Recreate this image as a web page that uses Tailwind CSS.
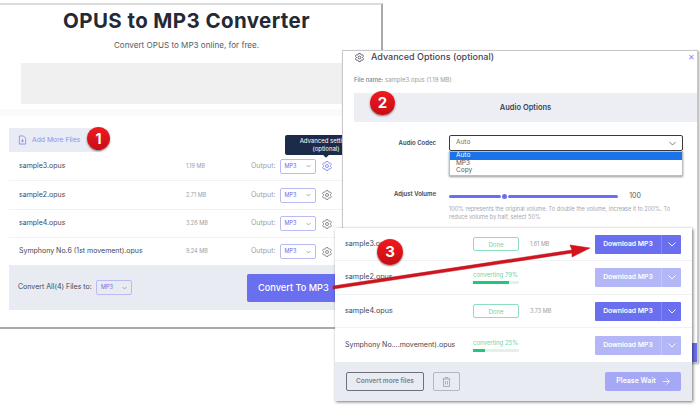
<!DOCTYPE html>
<html lang="en">
<head>
<meta charset="UTF-8">
<title>OPUS to MP3 Converter</title>
<script src="https://cdn.jsdelivr.net/npm/@tailwindcss/browser@4"></script>
</head>
<body class="bg-white">
<div class="relative w-[700px] h-[407px] overflow-hidden bg-white font-['Inter','Liberation_Sans',sans-serif] text-[#3f4654]">

  <!-- window 1: converter page -->
  <div class="absolute left-0 top-[3px] w-[383px] h-[326px] bg-white border-t-2 border-r-2 border-b-2 border-[#a9a9a9] border-t-[#dcdcdc]">
    <h1 class="pr-[8px] text-center text-[20.5px] leading-[32px] font-bold tracking-[0.4px] text-[#232a36]">OPUS to MP3 Converter</h1>
    <p class="mt-[2px] pr-[8px] text-center text-[8.1px] leading-[12px] text-[#555b66]">Convert OPUS to MP3 online, for free.</p>
    <div class="mt-[12px] ml-[21px] mr-[20px] h-[41px] bg-[#f0f0f0]"></div>
    <div class="mt-[5px] h-[7px] bg-[#fafafa]"></div>

    <div class="mt-[12px] ml-[9px] mr-[6px]">
      <div class="flex items-center gap-[4px] w-[92px] h-[24px] pl-[9px] bg-[#e9ecf4] text-[#8d90ec]">
        <svg class="w-[9px] h-[10px]" viewBox="0 0 20 22" fill="none" stroke="currentColor" stroke-width="2"><path d="M3 2h9l5 5v13H3zM10 9v7M7 13h6"/></svg>
        <span class="ml-[1px] text-[6.8px]">Add More Files</span>
      </div>
      <div>
        <div class="flex items-center h-[29px] border-b border-[#f1f2f5] pl-[10px] text-[7px]">
          <span class="w-[167px]">sample3.opus</span>
          <span class="w-[65px] text-[5.5px] text-[#9a9ea6]">1.19 MB</span>
          <span class="text-[7px] text-[#9a9ea6]">Output:</span>
          <span class="ml-[4px] flex items-center justify-between w-[36px] h-[15px] px-[4px] border border-[#b9bbf3] rounded-[2px] text-[5.5px] text-[#6a6de6]">MP3
            <svg class="w-[5px] h-[4px]" viewBox="0 0 10 8" fill="none" stroke="#8a8d98" stroke-width="1.4"><path d="M1 2l4 4 4-4"/></svg>
          </span>
          <svg class="ml-[5px] w-[12px] h-[12px]" viewBox="0 0 24 24" fill="none" stroke="#6a6de6" stroke-width="1.5"><path d="M9.594 3.94c.09-.542.56-.94 1.11-.94h2.593c.55 0 1.02.398 1.11.94l.213 1.281c.063.374.313.686.645.87.074.04.147.083.22.127.324.196.72.257 1.075.124l1.217-.456a1.125 1.125 0 011.37.49l1.296 2.247a1.125 1.125 0 01-.26 1.431l-1.003.827c-.293.24-.438.613-.431.992a6.759 6.759 0 010 .255c-.007.378.138.75.43.99l1.005.828c.424.35.534.954.26 1.43l-1.298 2.247a1.125 1.125 0 01-1.369.491l-1.217-.456c-.355-.133-.75-.072-1.076.124a6.57 6.57 0 01-.22.128c-.331.183-.581.495-.644.869l-.213 1.28c-.09.543-.56.941-1.11.941h-2.594c-.55 0-1.02-.398-1.11-.94l-.213-1.281c-.062-.374-.312-.686-.644-.87a6.52 6.52 0 01-.22-.127c-.325-.196-.72-.257-1.076-.124l-1.217.456a1.125 1.125 0 01-1.369-.49l-1.297-2.247a1.125 1.125 0 01.26-1.431l1.004-.827c.292-.24.437-.613.43-.992a6.932 6.932 0 010-.255c.007-.378-.138-.75-.43-.99l-1.004-.828a1.125 1.125 0 01-.26-1.43l1.297-2.247a1.125 1.125 0 011.37-.491l1.216.456c.356.133.751.072 1.076-.124.072-.044.146-.087.22-.128.332-.183.582-.495.644-.869l.214-1.281zM15 12a3 3 0 11-6 0 3 3 0 016 0z"/></svg>
        </div>
        <div class="flex items-center h-[29px] border-b border-[#f1f2f5] pl-[10px] text-[7px]">
          <span class="w-[167px]">sample2.opus</span>
          <span class="w-[65px] text-[5.5px] text-[#9a9ea6]">2.71 MB</span>
          <span class="text-[7px] text-[#9a9ea6]">Output:</span>
          <span class="ml-[4px] flex items-center justify-between w-[36px] h-[15px] px-[4px] border border-[#b9bbf3] rounded-[2px] text-[5.5px] text-[#6a6de6]">MP3
            <svg class="w-[5px] h-[4px]" viewBox="0 0 10 8" fill="none" stroke="#8a8d98" stroke-width="1.4"><path d="M1 2l4 4 4-4"/></svg>
          </span>
          <svg class="ml-[5px] w-[12px] h-[12px]" viewBox="0 0 24 24" fill="none" stroke="#60646e" stroke-width="1.5"><path d="M9.594 3.94c.09-.542.56-.94 1.11-.94h2.593c.55 0 1.02.398 1.11.94l.213 1.281c.063.374.313.686.645.87.074.04.147.083.22.127.324.196.72.257 1.075.124l1.217-.456a1.125 1.125 0 011.37.49l1.296 2.247a1.125 1.125 0 01-.26 1.431l-1.003.827c-.293.24-.438.613-.431.992a6.759 6.759 0 010 .255c-.007.378.138.75.43.99l1.005.828c.424.35.534.954.26 1.43l-1.298 2.247a1.125 1.125 0 01-1.369.491l-1.217-.456c-.355-.133-.75-.072-1.076.124a6.57 6.57 0 01-.22.128c-.331.183-.581.495-.644.869l-.213 1.28c-.09.543-.56.941-1.11.941h-2.594c-.55 0-1.02-.398-1.11-.94l-.213-1.281c-.062-.374-.312-.686-.644-.87a6.52 6.52 0 01-.22-.127c-.325-.196-.72-.257-1.076-.124l-1.217.456a1.125 1.125 0 01-1.369-.49l-1.297-2.247a1.125 1.125 0 01.26-1.431l1.004-.827c.292-.24.437-.613.43-.992a6.932 6.932 0 010-.255c.007-.378-.138-.75-.43-.99l-1.004-.828a1.125 1.125 0 01-.26-1.43l1.297-2.247a1.125 1.125 0 011.37-.491l1.216.456c.356.133.751.072 1.076-.124.072-.044.146-.087.22-.128.332-.183.582-.495.644-.869l.214-1.281zM15 12a3 3 0 11-6 0 3 3 0 016 0z"/></svg>
        </div>
        <div class="flex items-center h-[28px] border-b border-[#f1f2f5] pl-[10px] text-[7px]">
          <span class="w-[167px]">sample4.opus</span>
          <span class="w-[65px] text-[5.5px] text-[#9a9ea6]">3.26 MB</span>
          <span class="text-[7px] text-[#9a9ea6]">Output:</span>
          <span class="ml-[4px] flex items-center justify-between w-[36px] h-[15px] px-[4px] border border-[#b9bbf3] rounded-[2px] text-[5.5px] text-[#6a6de6]">MP3
            <svg class="w-[5px] h-[4px]" viewBox="0 0 10 8" fill="none" stroke="#8a8d98" stroke-width="1.4"><path d="M1 2l4 4 4-4"/></svg>
          </span>
          <svg class="ml-[5px] w-[12px] h-[12px]" viewBox="0 0 24 24" fill="none" stroke="#60646e" stroke-width="1.5"><path d="M9.594 3.94c.09-.542.56-.94 1.11-.94h2.593c.55 0 1.02.398 1.11.94l.213 1.281c.063.374.313.686.645.87.074.04.147.083.22.127.324.196.72.257 1.075.124l1.217-.456a1.125 1.125 0 011.37.49l1.296 2.247a1.125 1.125 0 01-.26 1.431l-1.003.827c-.293.24-.438.613-.431.992a6.759 6.759 0 010 .255c-.007.378.138.75.43.99l1.005.828c.424.35.534.954.26 1.43l-1.298 2.247a1.125 1.125 0 01-1.369.491l-1.217-.456c-.355-.133-.75-.072-1.076.124a6.57 6.57 0 01-.22.128c-.331.183-.581.495-.644.869l-.213 1.28c-.09.543-.56.941-1.11.941h-2.594c-.55 0-1.02-.398-1.11-.94l-.213-1.281c-.062-.374-.312-.686-.644-.87a6.52 6.52 0 01-.22-.127c-.325-.196-.72-.257-1.076-.124l-1.217.456a1.125 1.125 0 01-1.369-.49l-1.297-2.247a1.125 1.125 0 01.26-1.431l1.004-.827c.292-.24.437-.613.43-.992a6.932 6.932 0 010-.255c.007-.378-.138-.75-.43-.99l-1.004-.828a1.125 1.125 0 01-.26-1.43l1.297-2.247a1.125 1.125 0 011.37-.491l1.216.456c.356.133.751.072 1.076-.124.072-.044.146-.087.22-.128.332-.183.582-.495.644-.869l.214-1.281zM15 12a3 3 0 11-6 0 3 3 0 016 0z"/></svg>
        </div>
        <div class="flex items-center h-[27px] pl-[10px] text-[7px]">
          <span class="w-[167px]">Symphony No.6 (1st movement).opus</span>
          <span class="w-[65px] text-[5.5px] text-[#9a9ea6]">9.24 MB</span>
          <span class="text-[7px] text-[#9a9ea6]">Output:</span>
          <span class="ml-[4px] flex items-center justify-between w-[36px] h-[15px] px-[4px] border border-[#b9bbf3] rounded-[2px] text-[5.5px] text-[#6a6de6]">MP3
            <svg class="w-[5px] h-[4px]" viewBox="0 0 10 8" fill="none" stroke="#8a8d98" stroke-width="1.4"><path d="M1 2l4 4 4-4"/></svg>
          </span>
          <svg class="ml-[5px] w-[12px] h-[12px]" viewBox="0 0 24 24" fill="none" stroke="#60646e" stroke-width="1.5"><path d="M9.594 3.94c.09-.542.56-.94 1.11-.94h2.593c.55 0 1.02.398 1.11.94l.213 1.281c.063.374.313.686.645.87.074.04.147.083.22.127.324.196.72.257 1.075.124l1.217-.456a1.125 1.125 0 011.37.49l1.296 2.247a1.125 1.125 0 01-.26 1.431l-1.003.827c-.293.24-.438.613-.431.992a6.759 6.759 0 010 .255c-.007.378.138.75.43.99l1.005.828c.424.35.534.954.26 1.43l-1.298 2.247a1.125 1.125 0 01-1.369.491l-1.217-.456c-.355-.133-.75-.072-1.076.124a6.57 6.57 0 01-.22.128c-.331.183-.581.495-.644.869l-.213 1.28c-.09.543-.56.941-1.11.941h-2.594c-.55 0-1.02-.398-1.11-.94l-.213-1.281c-.062-.374-.312-.686-.644-.87a6.52 6.52 0 01-.22-.127c-.325-.196-.72-.257-1.076-.124l-1.217.456a1.125 1.125 0 01-1.369-.49l-1.297-2.247a1.125 1.125 0 01.26-1.431l1.004-.827c.292-.24.437-.613.43-.992a6.932 6.932 0 010-.255c.007-.378-.138-.75-.43-.99l-1.004-.828a1.125 1.125 0 01-.26-1.43l1.297-2.247a1.125 1.125 0 011.37-.491l1.216.456c.356.133.751.072 1.076-.124.072-.044.146-.087.22-.128.332-.183.582-.495.644-.869l.214-1.281zM15 12a3 3 0 11-6 0 3 3 0 016 0z"/></svg>
        </div>
      </div>
      <div class="flex items-center h-[45px] pl-[9px] bg-[#e8ebf1] text-[7px]">
        <span class="w-[73px] whitespace-nowrap">Convert All(4) Files to:</span>
        <span class="ml-[5px] flex items-center justify-between w-[36px] h-[15px] px-[4px] border border-[#b9bbf3] rounded-[2px] text-[5.5px] text-[#6a6de6]">MP3
          <svg class="w-[5px] h-[4px]" viewBox="0 0 10 8" fill="none" stroke="#8a8d98" stroke-width="1.4"><path d="M1 2l4 4 4-4"/></svg>
        </span>
        <span class="ml-[115px] flex items-center w-[110px] h-[28px] pl-[11px] rounded-[2px] bg-[#6a6ff0] text-white text-[9.2px] font-medium">Convert To MP3</span>
      </div>
    </div>

    <!-- tooltip on the first gear -->
    <div class="absolute left-[285px] top-[130px] w-[82px] h-[20px] pt-[2px] rounded-[2px] bg-[#1d2b4a] text-white text-[6px] leading-[8px] text-center">Advanced settings<br>(optional)
      <span class="absolute left-[39px] top-[18px] w-[4px] h-[4px] rotate-45 bg-[#1d2b4a]"></span>
    </div>
  </div>

  <!-- window 2: advanced options -->
  <div class="absolute left-[342px] top-[50px] w-[356px] h-[313px] bg-white border border-[#c9c9c9] shadow-[1px_1px_2px_rgba(0,0,0,0.35)]">
    <div class="flex items-center h-[12px] pl-[11px]">
      <svg class="w-[11px] h-[11px]" viewBox="0 0 24 24" fill="none" stroke="#3f4654" stroke-width="1.8"><path d="M9.594 3.94c.09-.542.56-.94 1.11-.94h2.593c.55 0 1.02.398 1.11.94l.213 1.281c.063.374.313.686.645.87.074.04.147.083.22.127.324.196.72.257 1.075.124l1.217-.456a1.125 1.125 0 011.37.49l1.296 2.247a1.125 1.125 0 01-.26 1.431l-1.003.827c-.293.24-.438.613-.431.992a6.759 6.759 0 010 .255c-.007.378.138.75.43.99l1.005.828c.424.35.534.954.26 1.43l-1.298 2.247a1.125 1.125 0 01-1.369.491l-1.217-.456c-.355-.133-.75-.072-1.076.124a6.57 6.57 0 01-.22.128c-.331.183-.581.495-.644.869l-.213 1.28c-.09.543-.56.941-1.11.941h-2.594c-.55 0-1.02-.398-1.11-.94l-.213-1.281c-.062-.374-.312-.686-.644-.87a6.52 6.52 0 01-.22-.127c-.325-.196-.72-.257-1.076-.124l-1.217.456a1.125 1.125 0 01-1.369-.49l-1.297-2.247a1.125 1.125 0 01.26-1.431l1.004-.827c.292-.24.437-.613.43-.992a6.932 6.932 0 010-.255c.007-.378-.138-.75-.43-.99l-1.004-.828a1.125 1.125 0 01-.26-1.43l1.297-2.247a1.125 1.125 0 011.37-.491l1.216.456c.356.133.751.072 1.076-.124.072-.044.146-.087.22-.128.332-.183.582-.495.644-.869l.214-1.281zM15 12a3 3 0 11-6 0 3 3 0 016 0z"/></svg>
      <span class="ml-[6px] text-[9px] leading-[12px] font-medium">Advanced Options (optional)</span>
      <span class="ml-auto mr-[2px] text-[8px] leading-[6px] text-[#8a8de8]">✕</span>
    </div>
    <p class="mt-[13px] ml-[11px] text-[6px] leading-[8px] text-[#9a9ea6]"><span class="font-medium text-[#7f838c]">File name:</span> sample3.opus (1.19 MB)</p>
    <div class="flex items-center justify-center mt-[9px] ml-[11px] h-[29px] bg-[#eceef3] text-[7.5px] font-semibold">Audio Options</div>

    <div class="relative flex mt-[13px]">
      <span class="shrink-0 w-[93px] pt-[3px] text-right text-[6px] font-semibold">Audio Codec</span>
      <div class="ml-[13px] shrink-0 flex items-center justify-between w-[234px] h-[16px] px-[6px] border border-[#3a3a3a] rounded-[2px] text-[6.5px] text-[#6b7079]">Auto
        <svg class="w-[7px] h-[5px]" viewBox="0 0 14 10" fill="none" stroke="#555" stroke-width="1.5"><path d="M1 2l6 6 6-6"/></svg>
      </div>
      <ul class="absolute left-[106px] top-[16px] w-[234px] bg-white border border-[#bdbdbd] text-[6.5px] leading-[7.7px] text-[#555b66] shadow-[0_1px_2px_rgba(0,0,0,0.4)]">
        <li class="pl-[6px] bg-[#1a73e8] text-white">Auto</li>
        <li class="pl-[6px]">MP3</li>
        <li class="pl-[6px]">Copy</li>
      </ul>
    </div>

    <div class="flex mt-[38px]">
      <span class="shrink-0 w-[93px] text-right text-[6px] font-semibold">Adjust Volume</span>
      <div class="ml-[13px] shrink-0 w-[234px]">
        <div class="flex items-center h-[14px]">
          <span class="w-[52px] h-[3px] rounded-full bg-[#6a6ff0]"></span>
          <span class="ml-[1px] w-[5px] h-[5px] rounded-full bg-[#6a6ff0]"></span>
          <span class="ml-[1px] w-[110px] h-[3px] rounded-full bg-[#6a6ff0]"></span>
          <span class="ml-[3px] w-[28px] text-center text-[7px] text-[#555b66]">100</span>
        </div>
        <p class="mt-[2px] text-[5.6px] leading-[8px] text-[#a3a7ae]">100% represents the original volume. To double the volume, increase it to 200%. To reduce volume by half, select 50%</p>
      </div>
    </div>
    <div class="absolute right-0 top-[292px] w-[5px] h-[19px] bg-[#6a6ff0]"></div>
  </div>

  <!-- window 3: results -->
  <div class="absolute left-[335px] top-[228px] w-[357px] h-[173px] bg-white shadow-[1px_1px_3px_rgba(0,0,0,0.55)]">
    <div class="flex items-center h-[33px] border-b border-[#f1f2f5] pl-[10px] text-[7.2px]">
      <span class="w-[128px]">sample3.opus</span>
      <span class="flex items-center justify-center w-[46px] h-[14px] border border-[#8fdcc0] rounded-[2px] text-[6px] text-[#6fd3ae]">Done</span>
      <span class="ml-[11px] w-[65px] text-[5.5px] text-[#9a9ea6]">1.61 MB</span>
      <div class="flex items-center w-[86px] h-[19px] rounded-[1px] bg-[#6a6ff0] text-white text-[6.8px] font-semibold">
        <span class="w-[66px] text-center">Download MP3</span>
        <span class="flex items-center justify-center flex-1 h-full border-l border-[#8488f2]"><svg class="w-[8px] h-[5px]" viewBox="0 0 16 10" fill="none" stroke="#fff" stroke-width="1.8"><path d="M1 1l7 7 7-7"/></svg></span>
      </div>
    </div>
    <div class="flex items-center h-[34px] border-b border-[#f1f2f5] pl-[10px] text-[7.2px]">
      <span class="w-[128px]">sample2.opus</span>
      <div class="w-[122px]">
        <p class="text-[6px] leading-[8px] text-[#6fd3ae]">converting 79%</p>
        <div class="mt-[2px] w-[46px] h-[3px] bg-[#dff3ea]"><div class="h-full bg-[#22c77f]" style="width:79%"></div></div>
      </div>
      <div class="flex items-center w-[86px] h-[19px] rounded-[1px] bg-[#b4b7f7] text-white text-[6.8px] font-semibold">
        <span class="w-[66px] text-center">Download MP3</span>
        <span class="flex items-center justify-center flex-1 h-full border-l border-[#c4c6f9]"><svg class="w-[8px] h-[5px]" viewBox="0 0 16 10" fill="none" stroke="#fff" stroke-width="1.8"><path d="M1 1l7 7 7-7"/></svg></span>
      </div>
    </div>
    <div class="flex items-center h-[33px] border-b border-[#f1f2f5] pl-[10px] text-[7.2px]">
      <span class="w-[128px]">sample4.opus</span>
      <span class="flex items-center justify-center w-[46px] h-[14px] border border-[#8fdcc0] rounded-[2px] text-[6px] text-[#6fd3ae]">Done</span>
      <span class="ml-[11px] w-[65px] text-[5.5px] text-[#9a9ea6]">3.73 MB</span>
      <div class="flex items-center w-[86px] h-[19px] rounded-[1px] bg-[#6a6ff0] text-white text-[6.8px] font-semibold">
        <span class="w-[66px] text-center">Download MP3</span>
        <span class="flex items-center justify-center flex-1 h-full border-l border-[#8488f2]"><svg class="w-[8px] h-[5px]" viewBox="0 0 16 10" fill="none" stroke="#fff" stroke-width="1.8"><path d="M1 1l7 7 7-7"/></svg></span>
      </div>
    </div>
    <div class="flex items-center h-[34px] pl-[10px] text-[7px]">
      <span class="w-[128px]">Symphony No....movement).opus</span>
      <div class="w-[122px]">
        <p class="text-[6px] leading-[8px] text-[#6fd3ae]">converting 25%</p>
        <div class="mt-[2px] w-[46px] h-[3px] bg-[#dff3ea]"><div class="h-full bg-[#22c77f]" style="width:25%"></div></div>
      </div>
      <div class="flex items-center w-[86px] h-[19px] rounded-[1px] bg-[#b4b7f7] text-white text-[6.8px] font-semibold">
        <span class="w-[66px] text-center">Download MP3</span>
        <span class="flex items-center justify-center flex-1 h-full border-l border-[#c4c6f9]"><svg class="w-[8px] h-[5px]" viewBox="0 0 16 10" fill="none" stroke="#fff" stroke-width="1.8"><path d="M1 1l7 7 7-7"/></svg></span>
      </div>
    </div>
    <div class="flex items-center h-[39px] pl-[11px] pr-[11px] bg-[#e8ebf1]">
      <span class="flex items-center justify-center w-[78px] h-[19px] border border-[#6b7079] rounded-[2px] text-[6.5px] font-semibold text-[#7a7f89]">Convert more files</span>
      <span class="ml-[9px] flex items-center justify-center w-[27px] h-[19px] border border-[#b4b7c0] rounded-[2px]">
        <svg class="w-[9px] h-[10px]" viewBox="0 0 18 20" fill="none" stroke="#9a9ea6" stroke-width="1.5"><path d="M1 4h16M6 4V1h6v3M3 4v15h12V4M7 8v7M11 8v7"/></svg>
      </span>
      <span class="ml-auto flex items-center justify-center gap-[6px] w-[76px] h-[19px] rounded-[2px] bg-[#a5a9f5] text-white text-[7px] font-semibold">Please Wait
        <svg class="w-[8px] h-[7px]" viewBox="0 0 16 14" fill="none" stroke="#fff" stroke-width="1.5"><path d="M1 7h14M9 1l6 6-6 6"/></svg>
      </span>
    </div>
  </div>

  <!-- red arrow and step badges drawn over the screenshots -->
  <svg class="absolute left-0 top-0 w-[700px] h-[407px]" viewBox="0 0 700 407" fill="none">
    <path d="M333 286L572 250L570 245L590 248L572 257L572 253L333 289Z" fill="#d8121c" stroke="#a80f16" stroke-width="0.5"/>
  </svg>
  <span class="absolute left-[87px] top-[127px] flex items-center justify-center w-[23px] h-[23px] rounded-full bg-linear-to-b from-[#f01a20] to-[#c80c14] text-white text-[14px] font-bold shadow-[0_1px_2px_rgba(0,0,0,0.5)]">1</span>
  <span class="absolute left-[370px] top-[91px] flex items-center justify-center w-[25px] h-[24px] rounded-full bg-linear-to-b from-[#f01a20] to-[#c80c14] text-white text-[15px] font-bold shadow-[0_1px_2px_rgba(0,0,0,0.5)]">2</span>
  <span class="absolute left-[377px] top-[239px] flex items-center justify-center w-[26px] h-[26px] rounded-full bg-linear-to-b from-[#f01a20] to-[#c80c14] text-white text-[15px] font-bold shadow-[0_1px_2px_rgba(0,0,0,0.5)]">3</span>
</div>
</body>
</html>
